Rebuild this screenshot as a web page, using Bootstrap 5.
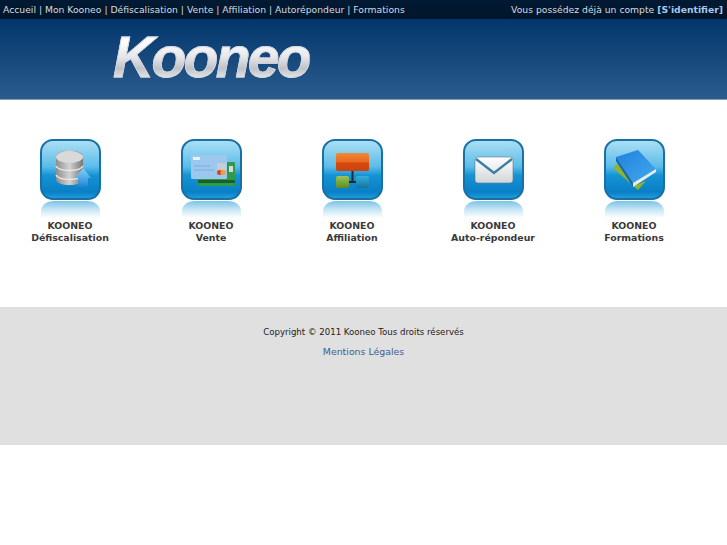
<!DOCTYPE html>
<html lang="fr">
<head>
    <meta charset="UTF-8">
    <meta name="viewport" content="width=device-width, initial-scale=1.0">
    <title>Kooneo</title>
    <link href="https://cdn.jsdelivr.net/npm/bootstrap@5.3.0/dist/css/bootstrap.min.css" rel="stylesheet">
    <style>
        body {
            font-family: "DejaVu Sans", sans-serif;
            background: #fff;
        }
        .top-bar {
            height: 19px;
            padding: 0 4px 0 3px;
            background: linear-gradient(#011a33, #00152b);
            color: #d6dde4;
            font-size: 9.24px;
            line-height: 19px;
            white-space: nowrap;
        }
        .top-bar a {
            color: #d6dde4;
            text-decoration: none;
        }
        .top-bar .login-link {
            color: #a5c8ee;
            font-weight: 700;
        }
        .brand-band {
            height: 81px;
            padding-left: 113px;
            background: linear-gradient(#03366b, #2b5c8e);
            border-bottom: 1px solid #7f9cb8;
        }
        .brand-logo {
            font-family: "Liberation Sans", sans-serif;
            font-size: 57px;
            font-weight: 700;
            font-style: italic;
            letter-spacing: -2.7px;
            line-height: 76px;
            background: linear-gradient(#fff 24%, #e6e7ea 50%, #bfc2c7 68%, #eceef0 86%);
            -webkit-background-clip: text;
            background-clip: text;
            color: transparent;
            -webkit-text-stroke: .8px #d4d6da;
        }
        .apps-row {
            height: 207px;
            padding-top: 39px;
        }
        .app-tile {
            width: 141px;
            padding-right: 1px;
            color: #3a3a3a;
            font-size: 9.4px;
            font-weight: 700;
            line-height: 12px;
            text-align: center;
            text-decoration: none;
        }
        .app-tile svg {
            display: block;
            margin: 0 auto 2px;
        }
        .site-footer {
            height: 138px;
            padding-top: 19px;
            background: #e0e0e0;
            text-align: center;
        }
        .copy-line {
            color: #222;
            font-size: 8.6px;
            line-height: 12px;
            margin-bottom: 8px;
        }
        .legal-link {
            color: #3b5f8f;
            font-size: 9.4px;
            line-height: 12px;
            text-decoration: none;
        }
    </style>
</head>
<body>
    <svg width="0" height="0" class="d-block">
        <defs>
            <linearGradient id="tileFill" x1="0" y1="0" x2="0" y2="1">
                <stop offset="0" stop-color="#aee0f5"/>
                <stop offset=".45" stop-color="#5cbce8"/>
                <stop offset=".6" stop-color="#1493d4"/>
                <stop offset=".88" stop-color="#0a7fc6"/>
                <stop offset="1" stop-color="#22a0de"/>
            </linearGradient>
            <linearGradient id="tileGlow" x1="0" y1="0" x2="0" y2="1">
                <stop offset="0" stop-color="#7cc2e6"/>
                <stop offset=".45" stop-color="#c0e3f3"/>
                <stop offset="1" stop-color="#fff"/>
            </linearGradient>
            <linearGradient id="metal" x1="0" y1="0" x2="1" y2="0">
                <stop offset="0" stop-color="#8d8d8d"/>
                <stop offset=".5" stop-color="#d2d2d2"/>
                <stop offset="1" stop-color="#777"/>
            </linearGradient>
            <linearGradient id="arrowFill" x1="0" y1="0" x2="0" y2="1">
                <stop offset="0" stop-color="#8ad0f5"/>
                <stop offset="1" stop-color="#1f86d6"/>
            </linearGradient>
            <linearGradient id="orangeBox" x1="0" y1="0" x2="0" y2="1">
                <stop offset="0" stop-color="#f08a35"/>
                <stop offset=".5" stop-color="#ea6a1f"/>
                <stop offset=".55" stop-color="#d8480f"/>
                <stop offset="1" stop-color="#c9430f"/>
            </linearGradient>
            <linearGradient id="greenBox" x1="0" y1="0" x2="0" y2="1">
                <stop offset="0" stop-color="#9cc45a"/>
                <stop offset="1" stop-color="#5c8c20"/>
            </linearGradient>
            <linearGradient id="blueBox" x1="0" y1="0" x2="0" y2="1">
                <stop offset="0" stop-color="#35b0da"/>
                <stop offset="1" stop-color="#14729f"/>
            </linearGradient>
            <linearGradient id="mailFace" x1="0" y1="0" x2="0" y2="1">
                <stop offset="0" stop-color="#fff"/>
                <stop offset="1" stop-color="#d2d6da"/>
            </linearGradient>
            <linearGradient id="bookCover" x1="0" y1="0" x2="1" y2="1">
                <stop offset="0" stop-color="#1f82dc"/>
                <stop offset="1" stop-color="#45a8ee"/>
            </linearGradient>
            <symbol id="tileBase" viewBox="0 0 61 79">
                <path d="M1 79V72C1 66 7 62 14 62h33c7 0 13 4 13 10v7z" fill="url(#tileGlow)"/>
                <rect x="1" y="1" width="59" height="59" rx="12" fill="url(#tileFill)" stroke="#1870a4" stroke-width="2"/>
            </symbol>
        </defs>
    </svg>

    <div class="top-bar d-flex justify-content-between">
        <div>
            <a href="#">Accueil</a> | <a href="#">Mon Kooneo</a> | <a href="#">Défiscalisation</a> | <a href="#">Vente</a> | <a href="#">Affiliation</a> | <a href="#">Autorépondeur</a> | <a href="#">Formations</a>
        </div>
        <div>Vous possédez déjà un compte <a href="#" class="login-link">[S'identifier]</a></div>
    </div>
    <div class="brand-band">
        <span class="brand-logo">Kooneo</span>
    </div>

    <div class="apps-row d-flex">
        <a href="#" class="app-tile">
            <svg width="61" height="79" viewBox="0 0 61 79">
                <use href="#tileBase"/>
                <path d="M16 18c0-9 27-9 27 0v22c0 8-27 8-27 0z" fill="url(#metal)"/>
                <ellipse cx="29.500" cy="18" rx="13.500" ry="6" fill="#d9d9d9"/>
                <path d="M16 27c3 6 24 6 27 0M16 36c3 6 24 6 27 0" fill="none" stroke="#e8e8e8" stroke-width="1.500"/>
                <path d="M35 39L43 29 51 39h-3v8q-5 2-10 0v-8z" fill="url(#arrowFill)"/>
            </svg>
            KOONEO<br>Défiscalisation
        </a>
        <a href="#" class="app-tile">
            <svg width="61" height="79" viewBox="0 0 61 79">
                <use href="#tileBase"/>
                <rect x="17" y="23" width="37" height="24" rx="1" fill="#2f9a4e"/>
                <rect x="17" y="41" width="37" height="3" fill="#17612f"/>
                <rect x="10" y="16" width="36" height="24" rx="1.500" fill="#9cc8ef"/>
                <rect x="36" y="24" width="9" height="7" fill="#c9ccd0"/>
                <rect x="12" y="18" width="7" height="3" fill="#e8f2fb"/>
                <path d="M13 27h16M13 31h20" stroke="#7eabd8" stroke-width="1"/>
                <circle cx="38.500" cy="33.500" r="2.500" fill="#d9402a"/>
                <circle cx="42" cy="33.500" r="2.500" fill="#f0a030"/>
                <rect x="48" y="27" width="4" height="6" fill="#d8dcd8"/>
            </svg>
            KOONEO<br>Vente
        </a>
        <a href="#" class="app-tile">
            <svg width="61" height="79" viewBox="0 0 61 79">
                <use href="#tileBase"/>
                <path d="M30.500 32V43M27 43h7" fill="none" stroke="#1d2b38" stroke-width="2"/>
                <rect x="14" y="14" width="33" height="18" rx="2" fill="url(#orangeBox)"/>
                <rect x="14" y="37" width="13" height="12" rx="2" fill="url(#greenBox)"/>
                <rect x="34" y="37" width="13" height="12" rx="2" fill="url(#blueBox)"/>
            </svg>
            KOONEO<br>Affiliation
        </a>
        <a href="#" class="app-tile">
            <svg width="61" height="79" viewBox="0 0 61 79">
                <use href="#tileBase"/>
                <rect x="12" y="18" width="38" height="26" rx="3" fill="url(#mailFace)" stroke="#5c7a8c" stroke-width=".6"/>
                <path d="M13 20l18 14L49 20" fill="none" stroke="#3d7fa0" stroke-width="2.400"/>
            </svg>
            KOONEO<br>Auto-répondeur
        </a>
        <a href="#" class="app-tile">
            <svg width="61" height="79" viewBox="0 0 61 79">
                <use href="#tileBase"/>
                <path d="M9 29L14 24 32 46 42 42 34 51z" fill="#8db52c"/>
                <path d="M12 18L34 11 52 30 29 44z" fill="url(#bookCover)"/>
                <path d="M12 18L29 44v4L12 22z" fill="#1666b0"/>
                <path d="M29 44L52 30v3L29 48z" fill="#e8edf0"/>
            </svg>
            KOONEO<br>Formations
        </a>
    </div>

    <div class="site-footer">
        <div class="copy-line">Copyright © 2011 Kooneo Tous droits réservés</div>
        <a href="#" class="legal-link d-block">Mentions Légales</a>
    </div>
    <script src="https://cdn.jsdelivr.net/npm/bootstrap@5.3.0/dist/js/bootstrap.bundle.min.js"></script>
</body>
</html>
